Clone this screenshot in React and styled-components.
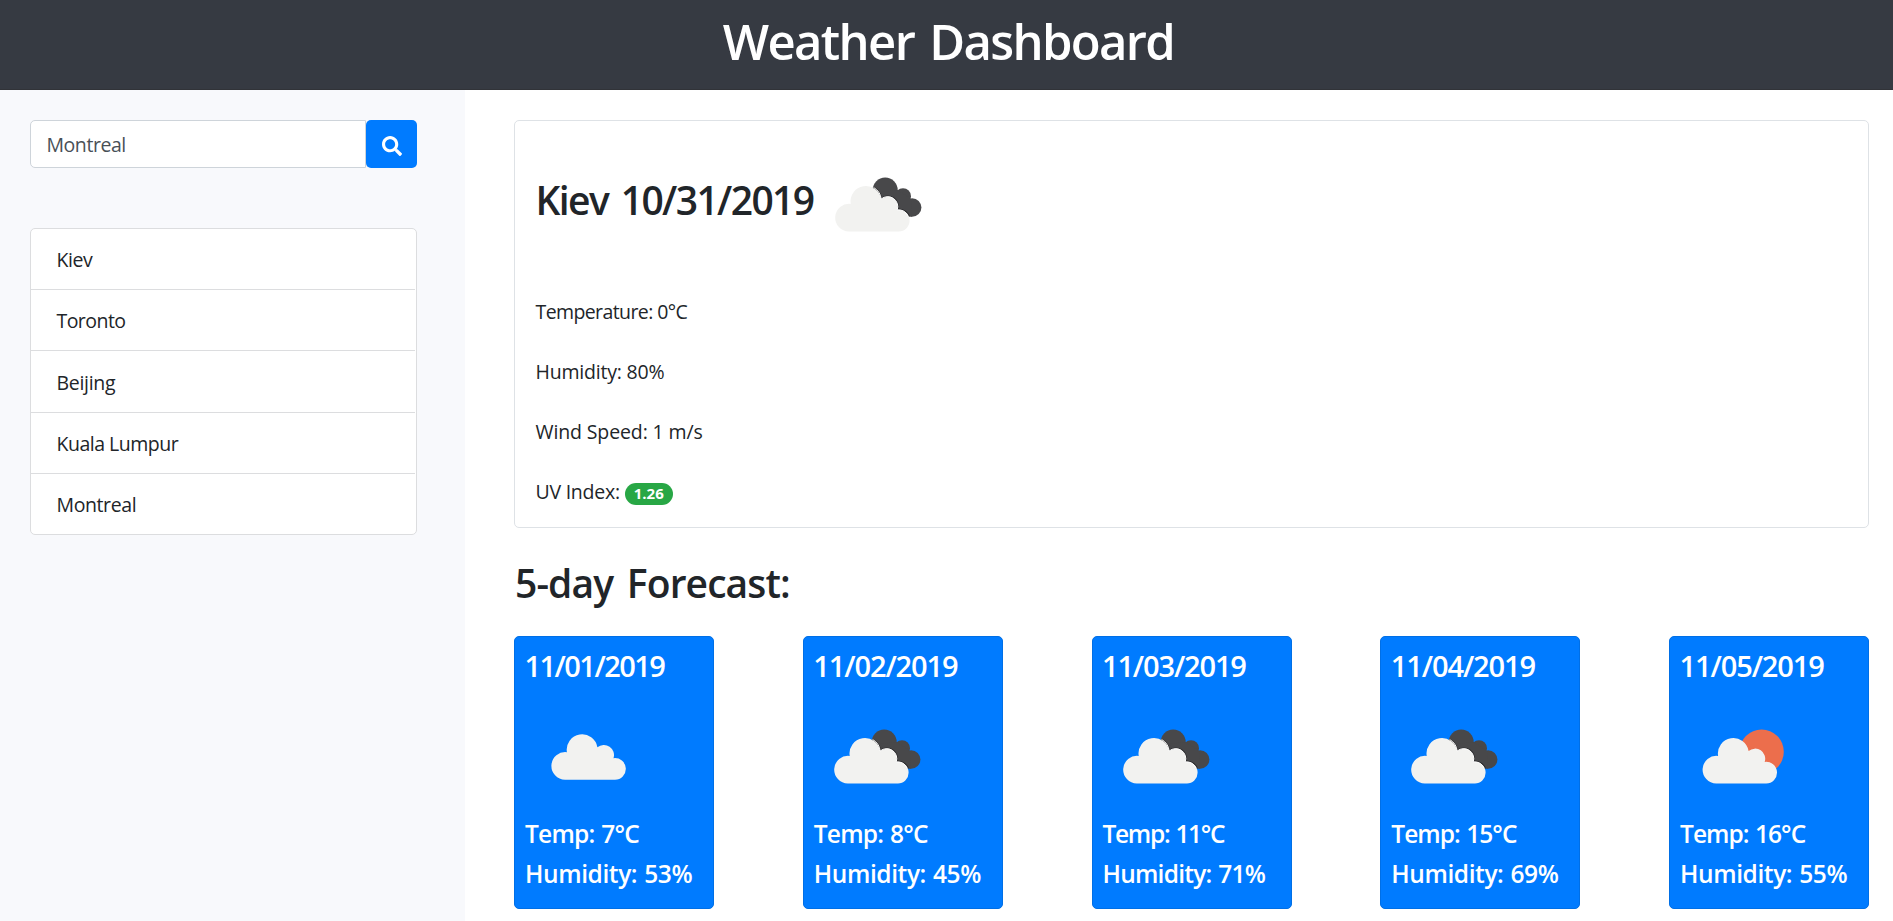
import React, { useId } from "react";
import styled, { createGlobalStyle } from "styled-components";
import { FaSearch } from "react-icons/fa";

const GlobalStyle = createGlobalStyle`
  *, *::before, *::after { box-sizing: border-box; }
  body {
    margin: 0;
    background: #fff;
    color: #212529;
    font-family: "Segoe UI", "Open Sans", "Noto Sans", sans-serif;
    font-size: 19.5px;
    line-height: 30px;
    overflow: hidden;
  }
`;

const Page = styled.div`
  height: 921px;
  display: flex;
  flex-direction: column;
`;

const Header = styled.header`
  height: 90px;
  flex: none;
  padding: 11px 0 0 4px;
  background: #363a42;
  border-bottom: 1px solid #313338;
  text-align: center;
`;

const Title = styled.h1`
  margin: 0;
  color: #fff;
  font-size: 49px;
  font-weight: 600;
  line-height: 60px;
  letter-spacing: -1.65px;
  word-spacing: 4px;
`;

const Columns = styled.div`
  flex: 1;
  min-height: 0;
  display: flex;
`;

const Sidebar = styled.aside`
  width: 465px;
  flex: none;
  padding: 30px 48px 0 30px;
  background: #f8f9fc;
`;

const SearchForm = styled.form`
  display: flex;
  height: 48px;
`;

const SearchInput = styled.input`
  flex: 1;
  min-width: 0;
  padding: 2px 15.5px 0;
  border: 1px solid #ced4da;
  border-radius: 5px 0 0 5px;
  background: #fff;
  color: #495057;
  font: inherit;
  letter-spacing: -0.45px;
  outline: none;
`;

const SearchButton = styled.button`
  width: 51px;
  padding: 3px 0 0;
  border: 0;
  border-radius: 5px;
  background: #007bff;
  color: #fff;
  display: flex;
  align-items: center;
  justify-content: center;
`;

const CityList = styled.ul`
  list-style: none;
  margin: 60px 0 0;
  padding: 0;
  height: 307px;
  display: flex;
  flex-direction: column;
  border: 1px solid #dcdddf;
  border-radius: 5px;
  background: #fff;
`;

const City = styled.li`
  flex: 1;
  display: flex;
  align-items: center;
  margin-right: 1px;
  padding: 2px 0 0 25.5px;
  letter-spacing: ${(p) => p.$track}px;

  & + & { border-top: 1px solid #dcdddf; }
`;

const Main = styled.main`
  flex: 1;
  min-width: 0;
  padding: 30px 24px 0 49px;
`;

const CurrentCard = styled.section`
  height: 408px;
  padding: 20.5px 20.5px 0;
  border: 1px solid #dee2e6;
  border-radius: 5px;
`;

const CurrentHead = styled.div`
  display: flex;
  align-items: center;
  gap: 2px;
  margin-bottom: 30px;
`;

const CurrentTitle = styled.h2`
  margin: 0;
  padding-bottom: 9px;
  font-size: 39px;
  font-weight: 600;
  line-height: 48px;
  letter-spacing: -1.6px;
  word-spacing: 4px;
`;

const Metric = styled.p`
  display: flex;
  align-items: center;
  gap: 5px;
  height: 30px;
  margin: 0 0 30px;
  letter-spacing: ${(p) => p.$track}px;
`;

const Badge = styled.span`
  height: 22px;
  width: 48px;
  margin-top: 5px;
  border-radius: 11px;
  background: #28a745;
  color: #fff;
  font-size: 15px;
  font-weight: 700;
  line-height: 20px;
  letter-spacing: 0;
  text-align: center;
`;

const ForecastTitle = styled.h2`
  margin: 30.5px 0 29.5px 1px;
  font-size: 39px;
  font-weight: 600;
  line-height: 48px;
  letter-spacing: -0.9px;
  word-spacing: 4.5px;
`;

const ForecastRow = styled.div`
  display: flex;
  justify-content: space-between;
`;

const DayCard = styled.article`
  width: 200px;
  height: 273px;
  padding: 11px 0 0 11px;
  border: 1px solid #006fe6;
  border-radius: 5px;
  background: #007bff;
  color: #fff;
  font-weight: 600;
`;

const DayDate = styled.h3`
  margin: 0 0 9.5px -1.5px;
  font-size: 29px;
  font-weight: 600;
  line-height: 36px;
  letter-spacing: ${(p) => p.$track}px;
`;

const DayStat = styled.p`
  margin: 0 0 10px -1px;
  font-size: 24.5px;
  line-height: 30px;
  white-space: nowrap;
  letter-spacing: ${(p) => p.$track}px;
  word-spacing: 1px;
`;

const IconSvg = styled.svg`
  display: block;
  flex: none;
`;

const FRONT_CLOUD =
  "M32.9 89.5A13.85 13.85 0 1 1 34.7 61.9A15.4 15.4 0 1 1 65.2 57A10.1 10.1 0 0 1 81.3 67.9A10.85 10.85 0 1 1 82.5 89.5Z";

function BackCloudShapes() {
  return (
    <>
      <circle cx="69.2" cy="48" r="12.5" />
      <circle cx="87" cy="54.2" r="8" />
      <circle cx="96.1" cy="65.5" r="9.3" />
      <path d="M65 50L82 48L95 57L96 74.8L80 72Z" />
    </>
  );
}

function BrokenClouds() {
  const clip = useId();
  return (
    <>
      <clipPath id={clip}>
        <BackCloudShapes />
      </clipPath>
      <g fill="#48484a">
        <BackCloudShapes />
      </g>
      <path d={FRONT_CLOUD} fill="none" stroke="#2e2e30" strokeWidth="2.4" clipPath={`url(#${clip})`} />
      <path d={FRONT_CLOUD} fill="#f2f2f0" />
      <path
        d="M57.5 45.4A15.4 15.4 0 0 1 65.2 57A10.1 10.1 0 0 1 81.3 67.9A10.85 10.85 0 0 1 92 74"
        fill="none"
        stroke="#fff"
        strokeWidth="1"
      />
    </>
  );
}

function WeatherIcon({ kind }) {
  return (
    <IconSvg width="125" height="125" viewBox="0 0 125 125">
      {kind === "broken" && <BrokenClouds />}
      {kind === "scattered" && (
        <path d={FRONT_CLOUD} fill="#f2f2f0" transform="translate(6.2 -3.7)" />
      )}
      {kind === "few" && (
        <>
          <circle cx="80.6" cy="57.8" r="22.2" fill="#ec6e4c" />
          <path d={FRONT_CLOUD} fill="#f2f2f0" transform="translate(2.4 0)" />
        </>
      )}
    </IconSvg>
  );
}

const cities = [
  { name: "Kiev", track: -0.4 },
  { name: "Toronto", track: -0.55 },
  { name: "Beijing", track: -0.3 },
  { name: "Kuala Lumpur", track: -0.5 },
  { name: "Montreal", track: -0.4 },
];

const days = [
  { date: "11/01/2019", dt: -1.55, icon: "scattered", temp: 7, tt: -0.75, humidity: 53, ht: -0.4 },
  { date: "11/02/2019", dt: -1.1, icon: "broken", temp: 8, tt: -0.75, humidity: 45, ht: -0.4 },
  { date: "11/03/2019", dt: -1.15, icon: "broken", temp: 11, tt: -1.3, humidity: 71, ht: -0.75 },
  { date: "11/04/2019", dt: -1.1, icon: "broken", temp: 15, tt: -0.95, humidity: 69, ht: -0.4 },
  { date: "11/05/2019", dt: -1.1, icon: "few", temp: 16, tt: -0.95, humidity: 55, ht: -0.4 },
];

export default function App() {
  return (
    <Page>
      <GlobalStyle />
      <Header>
        <Title>Weather Dashboard</Title>
      </Header>
      <Columns>
        <Sidebar>
          <SearchForm>
            <SearchInput type="text" defaultValue="Montreal" aria-label="City" />
            <SearchButton type="button" aria-label="Search">
              <FaSearch size={20} />
            </SearchButton>
          </SearchForm>
          <CityList>
            {cities.map((c) => (
              <City key={c.name} $track={c.track}>{c.name}</City>
            ))}
          </CityList>
        </Sidebar>
        <Main>
          <CurrentCard>
            <CurrentHead>
              <CurrentTitle>Kiev 10/31/2019</CurrentTitle>
              <WeatherIcon kind="broken" />
            </CurrentHead>
            <Metric $track={-0.6}>Temperature: 0°C</Metric>
            <Metric $track={-0.2}>Humidity: 80%</Metric>
            <Metric $track={-0.12}>Wind Speed: 1 m/s</Metric>
            <Metric $track={-0.25}>
              UV Index: <Badge>1.26</Badge>
            </Metric>
          </CurrentCard>
          <ForecastTitle>5-day Forecast:</ForecastTitle>
          <ForecastRow>
            {days.map((d) => (
              <DayCard key={d.date}>
                <DayDate $track={d.dt}>{d.date}</DayDate>
                <WeatherIcon kind={d.icon} />
                <DayStat $track={d.tt}>Temp: {d.temp}°C</DayStat>
                <DayStat $track={d.ht}>Humidity: {d.humidity}%</DayStat>
              </DayCard>
            ))}
          </ForecastRow>
        </Main>
      </Columns>
    </Page>
  );
}
